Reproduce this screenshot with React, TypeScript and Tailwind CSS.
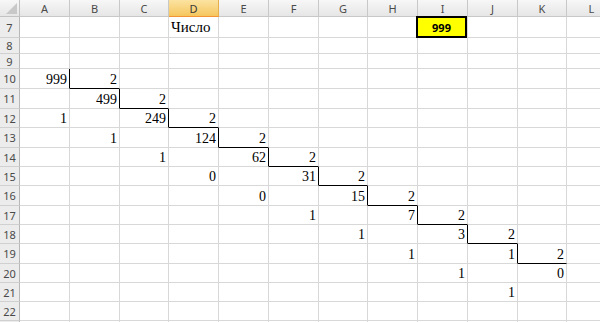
import React from "react";

type Cell = {
  value: string;
  stepRight?: boolean;
  stepBottom?: boolean;
};

const COLUMNS = ["A", "B", "C", "D", "E", "F", "G", "H", "I", "J", "K", "L"];

// widths include the 1px gridline on the right
const COL_WIDTHS = ["w-[50px]", "w-[50px]", "w-[49px]", "w-[50px]", "w-[50px]", "w-[50px]", "w-[49px]", "w-[50px]", "w-[50px]", "w-[50px]", "w-[49px]", "w-[50px]"];

const ROWS: { n: number; h: string }[] = [
  { n: 7, h: "h-[21px]" },
  { n: 8, h: "h-[16px]" },
  { n: 9, h: "h-[15px]" },
  { n: 10, h: "h-[20px]" },
  { n: 11, h: "h-[20px]" },
  { n: 12, h: "h-[19px]" },
  { n: 13, h: "h-[20px]" },
  { n: 14, h: "h-[19px]" },
  { n: 15, h: "h-[19px]" },
  { n: 16, h: "h-[20px]" },
  { n: 17, h: "h-[19px]" },
  { n: 18, h: "h-[19px]" },
  { n: 19, h: "h-[20px]" },
  { n: 20, h: "h-[19px]" },
  { n: 21, h: "h-[19px]" },
  { n: 22, h: "h-[19px]" },
  { n: 23, h: "h-[19px]" },
];

const DATA: Record<number, Record<string, Cell>> = {
  10: { A: { value: "999", stepRight: true }, B: { value: "2", stepBottom: true } },
  11: { B: { value: "499", stepRight: true }, C: { value: "2", stepBottom: true } },
  12: { A: { value: "1" }, C: { value: "249", stepRight: true }, D: { value: "2", stepBottom: true } },
  13: { B: { value: "1" }, D: { value: "124", stepRight: true }, E: { value: "2", stepBottom: true } },
  14: { C: { value: "1" }, E: { value: "62", stepRight: true }, F: { value: "2", stepBottom: true } },
  15: { D: { value: "0" }, F: { value: "31", stepRight: true }, G: { value: "2", stepBottom: true } },
  16: { E: { value: "0" }, G: { value: "15", stepRight: true }, H: { value: "2", stepBottom: true } },
  17: { F: { value: "1" }, H: { value: "7", stepRight: true }, I: { value: "2", stepBottom: true } },
  18: { G: { value: "1" }, I: { value: "3", stepRight: true }, J: { value: "2", stepBottom: true } },
  19: { H: { value: "1" }, J: { value: "1", stepRight: true }, K: { value: "2", stepBottom: true } },
  20: { I: { value: "1" }, K: { value: "0" } },
  21: { J: { value: "1" } },
};

const headerFont = { fontFamily: '"Noto Sans", "Liberation Sans", sans-serif' };
const cellFont = { fontFamily: '"Liberation Serif", "Times New Roman", serif' };

const Corner: React.FC = () => (
  <div className="w-[20px] h-[17px] shrink-0 border-r border-b border-[#c2c2c2] bg-gradient-to-b from-[#f7f7f7] to-[#e6e6e6] flex items-end justify-end p-[2px]">
    <svg width="11" height="11" viewBox="0 0 11 11">
      <polygon points="11,0 11,11 0,11" fill="#c8c8c8" />
    </svg>
  </div>
);

const ColumnHeader: React.FC<{ label: string; width: string }> = ({ label, width }) => {
  const active = label === "D";
  return (
    <div
      className={`${width} h-[17px] shrink-0 border-r border-b flex items-center justify-center text-[11px] leading-none ${
        active
          ? "bg-gradient-to-b from-[#fbe3a0] to-[#f5c65c] border-r-[#e5b04a] border-b-[#f29436] text-[#3a3a3a]"
          : "bg-gradient-to-b from-[#f7f7f7] to-[#e6e6e6] border-[#c8c8c8] text-[#4a4a4a]"
      }`}
      style={headerFont}
    >
      {label}
    </div>
  );
};

// row 23 only peeks in at the bottom edge, so its number is not drawn
const RowHeader: React.FC<{ n: number; h: string }> = ({ n, h }) => (
  <div
    className={`w-[20px] ${h} shrink-0 border-r border-b border-r-[#b8b8b8] border-b-[#d0d0d0] bg-[#ececec] flex items-center justify-center text-[11px] leading-none text-[#4a4a4a]`}
    style={headerFont}
  >
    {n < 23 ? n : null}
  </div>
);

const DataCell: React.FC<{ cell?: Cell; width: string; h: string }> = ({ cell, width, h }) => (
  <div
    className={`${width} ${h} shrink-0 border-r border-b flex items-end justify-end pr-[2px] pb-[1px] text-[14px] leading-none text-black ${
      cell?.stepRight ? "border-r-black" : "border-r-[#d8d8d8]"
    } ${cell?.stepBottom ? "border-b-black" : "border-b-[#d8d8d8]"}`}
    style={cellFont}
  >
    {cell?.value}
  </div>
);

export default function App() {
  return (
    <div className="w-[600px] h-[322px] overflow-hidden bg-white select-none">
      <div className="flex">
        <Corner />
        {COLUMNS.map((c, i) => (
          <ColumnHeader key={c} label={c} width={COL_WIDTHS[i]} />
        ))}
      </div>

      {ROWS.map(({ n, h }) => (
        <div key={n} className="flex">
          <RowHeader n={n} h={h} />
          {COLUMNS.map((c, i) => {
            if (n === 7 && c === "D") {
              return (
                <div
                  key={c}
                  className={`${COL_WIDTHS[i]} ${h} shrink-0 border-r border-b border-[#d8d8d8] flex items-end pl-[2px] pb-[2px] text-[15px] leading-none text-black`}
                  style={cellFont}
                >
                  Число
                </div>
              );
            }
            if (n === 7 && c === "I") {
              return (
                <div key={c} className={`${COL_WIDTHS[i]} ${h} shrink-0 border-r border-b border-[#d8d8d8] relative`}>
                  <div
                    className="absolute -left-[2px] -top-[1px] right-0 -bottom-[1px] border-2 border-black bg-[#ffff00] flex items-center justify-center text-[11px] font-bold leading-none text-black"
                    style={headerFont}
                  >
                    999
                  </div>
                </div>
              );
            }
            return <DataCell key={c} cell={DATA[n]?.[c]} width={COL_WIDTHS[i]} h={h} />;
          })}
        </div>
      ))}
    </div>
  );
}
